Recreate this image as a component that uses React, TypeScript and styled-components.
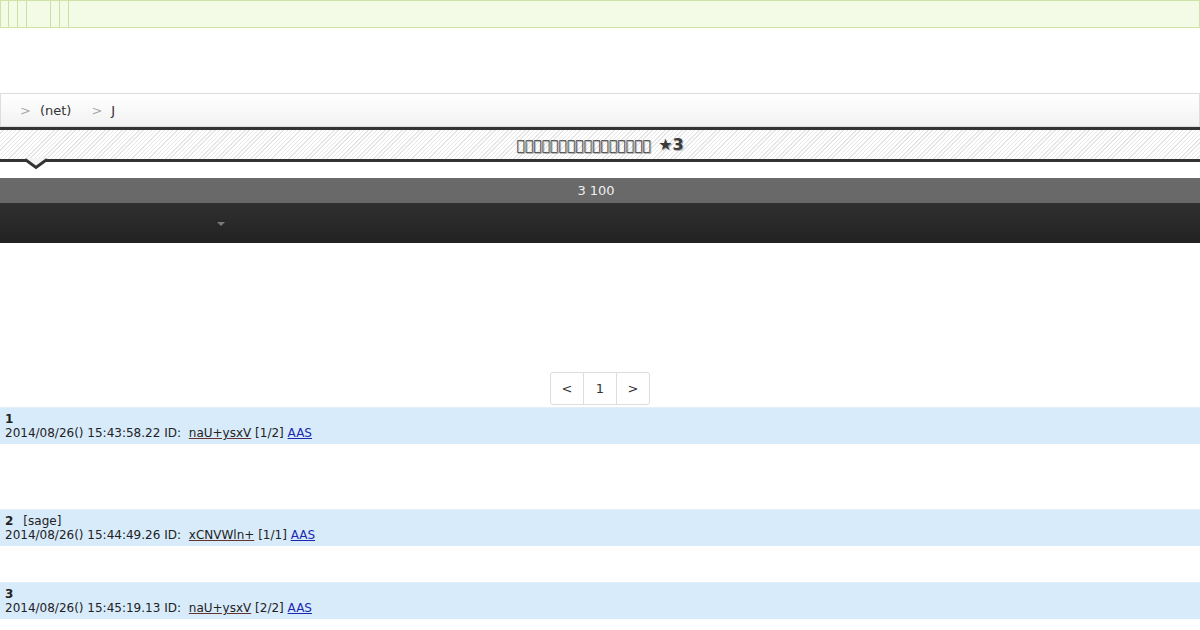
import React from "react";
import styled, { createGlobalStyle } from "styled-components";

const GlobalStyle = createGlobalStyle`
  body {
    margin: 0;
    background: #fff;
    font-family: "DejaVu Sans", Verdana, sans-serif;
    color: #222;
  }
`;

const TopStrip = styled.div`
  height: 26px;
  background: #f3fbe7;
  border: 1px solid #cfe3a8;
  display: flex;
`;

const StripCell = styled.span<{ $w: number }>`
  width: ${(p) => p.$w}px;
  box-sizing: border-box;
  border-right: 1px solid #cbdfa3;
`;

const Breadcrumb = styled.nav`
  margin-top: 65px;
  height: 32px;
  border: 1px solid #ddd;
  background: linear-gradient(#fff, #f2f2f2);
  display: flex;
  align-items: center;
  padding-left: 19px;
  gap: 20px;
  font-size: 13px;
  color: #333;
`;

const Crumb = styled.span`
  display: flex;
  align-items: center;
  gap: 9px;
  &::before {
    content: ">";
    color: #aaa;
    font-size: 13px;
  }
`;

const TitleBar = styled.header`
  position: relative;
  height: 29px;
  border-top: 3px solid #333;
  border-bottom: 3px solid #333;
  background: repeating-linear-gradient(135deg, #fff 0 2px, #e6e6e6 2px 3px);
  display: flex;
  align-items: center;
  justify-content: center;
`;

const Title = styled.h1`
  margin: 0;
  font-size: 16px;
  font-weight: bold;
  color: #3a3a3a;
  text-shadow: 1px 1px 0 #aaa;
`;

const Missing = styled.span`
  font-size: 14px;
  margin-right: 2px;
`;

const Notch = styled.svg`
  position: absolute;
  left: 25px;
  bottom: -11px;
`;

const CountBar = styled.div`
  margin-top: 16px;
  height: 25px;
  background: #696969;
  color: #eee;
  font-size: 13px;
  display: flex;
  align-items: center;
  justify-content: center;
  padding-right: 8px;
`;

const MenuBar = styled.div`
  height: 40px;
  background: linear-gradient(#303030, #222);
  display: flex;
  align-items: center;
  padding-left: 217px;
`;

const Caret = styled.span`
  width: 0;
  height: 0;
  border-left: 4px solid transparent;
  border-right: 4px solid transparent;
  border-top: 4px solid #7a7a7a;
  margin-top: 2px;
`;

const Pager = styled.div`
  margin: 129px auto 2px;
  width: max-content;
  display: flex;
  border: 1px solid #ddd;
  border-radius: 3px;
  background: #fff;
`;

const PageCell = styled.span`
  width: 32px;
  height: 31px;
  display: flex;
  align-items: center;
  justify-content: center;
  font-size: 13px;
  color: #333;
  & + & {
    border-left: 1px solid #ddd;
  }
`;

const PostHead = styled.div`
  background: #d8ebfb;
  border-top: 1px solid #e2f0fc;
  padding: 4px 5px;
  font-size: 12px;
  line-height: 14px;
  height: 28px;
`;

const PostNum = styled.span`
  font-weight: bold;
  margin-right: 10px;
`;

const IdLink = styled.a`
  color: #222;
  text-decoration: underline;
  text-decoration-color: #633;
  margin-left: 4px;
`;

const AasLink = styled.a`
  color: #1a28b0;
  text-decoration: underline;
`;

const PostBody = styled.div<{ $lines: number }>`
  height: ${(p) => 36 + (p.$lines - 1) * 14.5}px;
`;

type Post = { no: number; sage?: boolean; date: string; id: string; count: string; lines: number };

const posts: Post[] = [
  { no: 1, date: "2014/08/26() 15:43:58.22", id: "naU+ysxV", count: "[1/2]", lines: 3 },
  { no: 2, sage: true, date: "2014/08/26() 15:44:49.26", id: "xCNVWln+", count: "[1/1]", lines: 1 },
  { no: 3, date: "2014/08/26() 15:45:19.13", id: "naU+ysxV", count: "[2/2]", lines: 1 },
];

export default function App() {
  return (
    <>
      <GlobalStyle />
      <TopStrip>
        {[8, 9, 9, 24, 9, 9].map((w, i) => (
          <StripCell key={i} $w={w} />
        ))}
      </TopStrip>
      <Breadcrumb>
        <Crumb>(net)</Crumb>
        <Crumb>J</Crumb>
      </Breadcrumb>
      <TitleBar>
        <Title>
          <Missing>{"\uE000\uE001\uE002\uE003\uE004\uE005\uE006\uE007\uE008\uE009\uE00A\uE00B\uE00C\uE00D\uE00E\uE00F"}</Missing> ★3
        </Title>
        <Notch width="22" height="12" viewBox="0 0 22 12">
          <path d="M0 0 L11 8 L22 0 Z" fill="#f4f4f4" />
          <path d="M0 1.5 L11 9.5 L22 1.5" fill="none" stroke="#333" strokeWidth="3" />
        </Notch>
      </TitleBar>
      <CountBar>3 100</CountBar>
      <MenuBar>
        <Caret />
      </MenuBar>
      <Pager>
        <PageCell>&lt;</PageCell>
        <PageCell>1</PageCell>
        <PageCell>&gt;</PageCell>
      </Pager>
      {posts.map((p) => (
        <div key={p.no}>
          <PostHead>
            <div>
              <PostNum>{p.no}</PostNum>
              {p.sage && <span>[sage]</span>}
            </div>
            <div>
              {p.date} ID: <IdLink href="#">{p.id}</IdLink> {p.count} <AasLink href="#">AAS</AasLink>
            </div>
          </PostHead>
          <PostBody $lines={p.lines} />
        </div>
      ))}
    </>
  );
}
